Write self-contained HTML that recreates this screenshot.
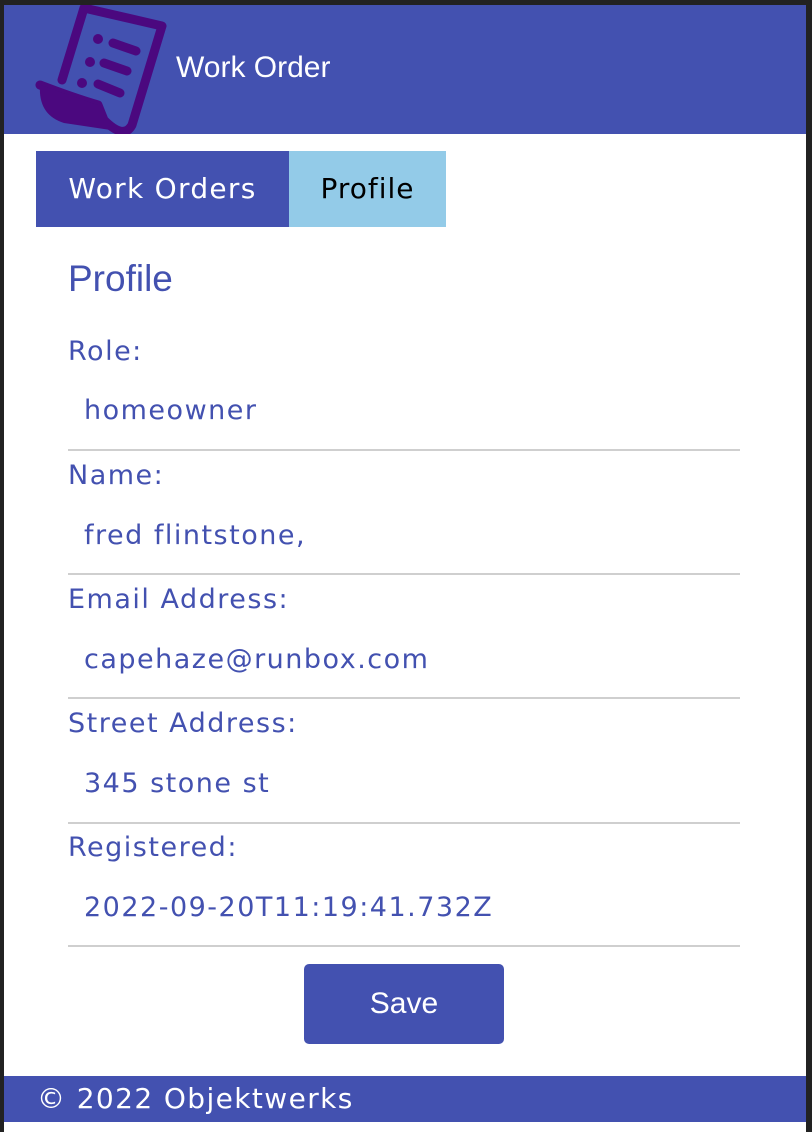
<!DOCTYPE html>
<html><head><style>
body{margin:0;width:812px;height:1132px;background:#222;position:relative;overflow:hidden;font-family:"DejaVu Sans","Liberation Sans",sans-serif;}
.page{position:absolute;left:4px;top:5px;width:802px;height:1127px;background:#fff;}
.hdr{position:absolute;left:0;top:0;width:802px;height:129px;background:#4351b0;}
.hdr .t{position:absolute;left:172px;top:46px;color:#fff;font-family:"Liberation Sans",sans-serif;font-size:30px;}
.tab{position:absolute;top:146px;height:76px;line-height:76px;font-size:28px;text-align:center;}
h1{position:absolute;left:64px;top:253px;margin:0;font-family:"Liberation Sans",sans-serif;font-weight:normal;font-size:37px;color:#4351b0;}
.lbl{position:absolute;left:64px;color:#4351b0;font-size:27px;letter-spacing:1.5px;}
.val{position:absolute;left:80px;color:#4351b0;font-size:27px;letter-spacing:1.5px;}
.ln{position:absolute;left:64px;width:672px;height:2px;background:#cfcfcf;}
.btn{position:absolute;left:300px;top:959px;width:200px;height:80px;background:#4351b0;border-radius:5px;color:#fff;font-family:"Liberation Sans",sans-serif;font-size:30px;text-align:center;line-height:80px;}
.ftr{position:absolute;left:0;top:1071px;width:802px;height:46px;background:#4351b0;color:#fff;font-size:28px;line-height:46px;letter-spacing:1.4px;}
</style></head><body>
<div class="page">
<div class="hdr">
<svg width="170" height="129" style="position:absolute;left:0;top:0" viewBox="0 0 170 129">
<g fill="none" stroke="#4b087f" stroke-width="9" stroke-linecap="round" stroke-linejoin="round">
<path d="M58 75 L80 3 L158 21 L128 120 Q120 135 100 115 L94 100 Q70 93 36 80"/>
</g>
<path d="M36 80 Q34 110 60 118 L120 127 Q100 118 94 100 Z" fill="#4b087f"/>
<g fill="#4b087f"><circle cx="94" cy="34" r="5"/><circle cx="86" cy="57" r="5"/><circle cx="78" cy="78" r="5"/></g>
<g stroke="#4b087f" stroke-width="9" stroke-linecap="round"><path d="M109 38 L132 46"/><path d="M100 58 L123 66"/><path d="M94 79 L116 88"/></g>
</svg>
<div class="t">Work Order</div>
</div>
<div class="tab" style="left:32px;width:253px;background:#4351b0;color:#fff;letter-spacing:1.3px">Work Orders</div>
<div class="tab" style="left:285px;width:157px;background:#93cbe8;color:#000;letter-spacing:1px">Profile</div>
<h1>Profile</h1>
<div class="lbl" style="top:331px">Role:</div><div class="val" style="top:390px">homeowner</div><div class="ln" style="top:444px"></div>
<div class="lbl" style="top:455px">Name:</div><div class="val" style="top:515px">fred flintstone,</div><div class="ln" style="top:568px"></div>
<div class="lbl" style="top:579px">Email Address:</div><div class="val" style="top:639px">capehaze@runbox.com</div><div class="ln" style="top:692px"></div>
<div class="lbl" style="top:703px">Street Address:</div><div class="val" style="top:763px">345 stone st</div><div class="ln" style="top:817px"></div>
<div class="lbl" style="top:827px">Registered:</div><div class="val" style="top:887px">2022-09-20T11:19:41.732Z</div><div class="ln" style="top:940px"></div>
<div class="btn">Save</div>
<div class="ftr"><span style="margin-left:33px">© 2022 Objektwerks</span></div>
</div>
</body></html>
